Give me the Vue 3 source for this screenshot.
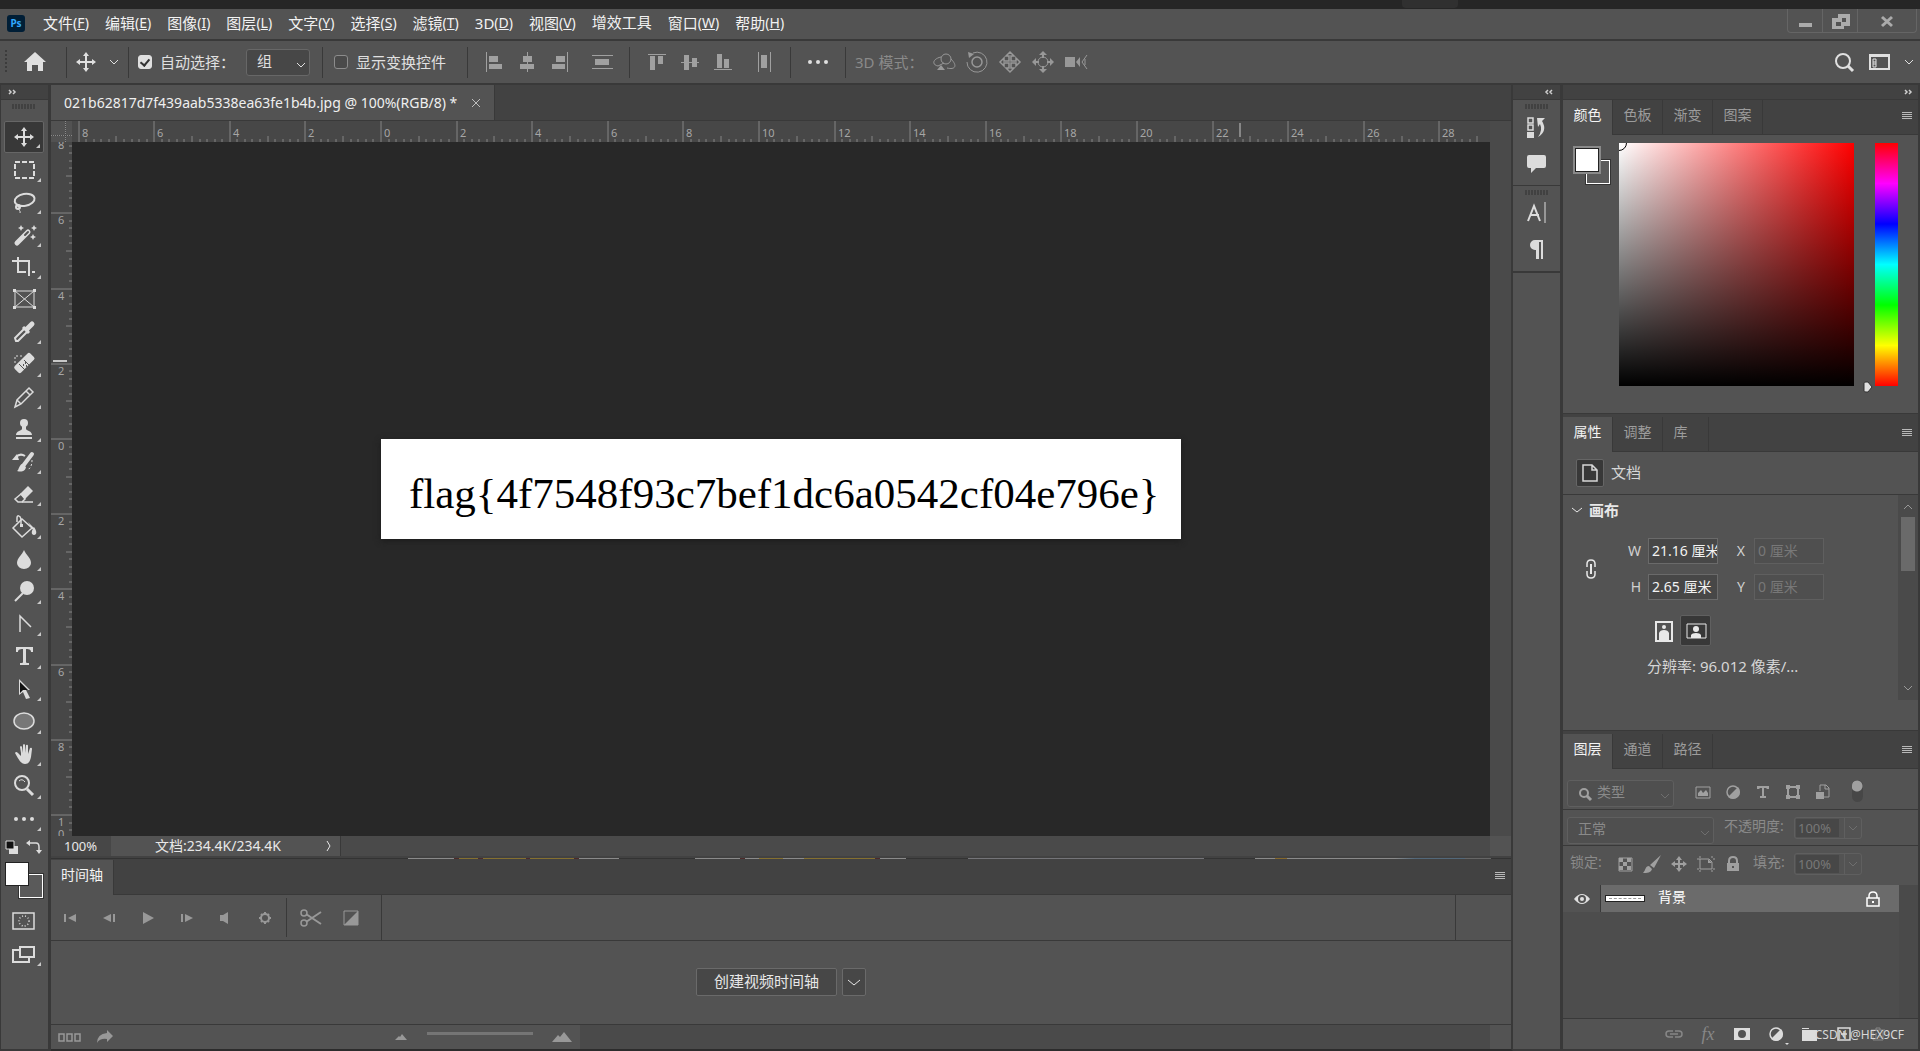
<script setup>
import { h, ref } from 'vue'

const DOT3 = '<circle cx="-8" cy="0" r="2"/><circle cx="0" cy="0" r="2"/><circle cx="8" cy="0" r="2"/>'
const MOVE =
  '<path d="M-7 0H7M0-7V7" stroke-width="2"/><path fill="currentColor" stroke="none" d="M0-10L3-6H-3ZM0 10L3 6H-3ZM-10 0L-6-3V3ZM10 0L6-3V3Z"/>'
const F = (d) => `<path fill="currentColor" stroke="none" d="${d}"/>`
const S = (d, w = 2) => `<path fill="none" stroke-width="${w}" d="${d}"/>`

/* Glyphs are drawn around their own centre point. */
const glyphs = {
  move: MOVE,
  marquee: '<rect x="-9" y="-8" width="19" height="16" stroke-dasharray="5 2" stroke-width="2"/>',
  lasso: '<ellipse cx="1" cy="-2" rx="10" ry="6" transform="rotate(-10)"/><circle cx="-6" cy="5" r="2"/>' + S('M-5 5C-7 8-3 8-4 11M-8 5L-3 4', 1),
  wand: '<path d="M-7 8L4-3" stroke-width="5" stroke-linecap="round"/><path d="M1 0L4-3" stroke="#535353" stroke-width="2" stroke-linecap="round"/>' +
    F('M-3-10L-2-8L0-7L-2-6L-3-4L-4-6L-6-7L-4-8ZM10-10L11-8L13-7L11-6L10-4L9-6L7-7L9-8ZM9-1L10 1L12 2L10 3L9 5L8 3L6 2L8 1Z'),
  crop: S('M-12-6H5V9M-6-10V5H2M8 5H11', 2),
  frame: S('M-9-8H10V8H-9ZM-9-8L10 8M10-8L-9 8', 1) + F('M-11-10h3v3h-3ZM9-10h3v3h-3ZM-11 7h3v3h-3ZM9 7h3v3h-3Z'),
  dropper: S('M-8 9L-9 6L1-4L4-1L-6 9Z', 2) + '<path d="M-1-5L5 1" stroke-width="3"/><path d="M3-3L8-8" stroke-width="5" stroke-linecap="round"/>',
  heal: '<rect x="-10" y="-5" width="22" height="9" rx="2" transform="rotate(-45)" fill="currentColor" stroke="none"/>' +
    '<path d="M-5 0L1 6M0-4L5 1" stroke="#535353" stroke-width="1"/><path d="M-9-1V-8H-2" stroke-width="1" stroke-dasharray="2 2"/>' +
    '<path d="M-1 1h1M1-1h1M2 2h1" stroke="#535353" stroke-width="2"/>',
  pencil: S('M-9 10L-7 3L5-9L9-5L-3 7ZM-7 3L-3 7M2-6L6-2', 1.5),
  stamp: '<circle cx="0" cy="-6" r="4" fill="currentColor" stroke="none"/>' + F('M-2-4H2L2 0C3 2 8 2 8 6H-8C-8 2-3 2-2 0ZM-8 8H8V10H-8Z'),
  history: '<path d="M-1 4L8-8" stroke-width="4" stroke-linecap="round"/>' + F('M-2 2L2 5C1 10-3 10-7 9C-5 8-5 3-2 2ZM-12-2L-7-8L-5-2Z') +
    S('M-8-5C-5-8-2-8 1-6', 2) + '<path d="M8-2C8 4 6 7 3 8" stroke-width="1" stroke-dasharray="2 2"/>',
  eraser: F('M-4 0L4-8L9-3L1 5Z') + S('M-3 0L-9 5L-6 8H-2L1 5Z', 1.5) + S('M-2 8H9', 1.5),
  bucket: S('M-11 1L-2-8L8 1L-2 10Z', 1.5) + S('M-7-5V-9C-7-12-4-12-3-8V-3', 1.5) + F('M-4-3h3v3h-3ZM10 0C13 4 13 8 10 8S7 4 10 0ZM4-5L11 2L8 2Z'),
  blur: F('M0-9C2-4 7-1 7 4A7 6 0 0 1-7 4C-7-1-2-4 0-9Z'),
  dodge: '<circle cx="3" cy="-4" r="7" fill="currentColor" stroke="none"/>' + S('M-9 9L-1 1', 2),
  pen: S('M-4 8V-8L7 3', 1.5),
  type: F('M-8-9H9V-4H7C7-6 6-7 2-7V6C2 7 3 7 5 7V9H-4V7C-2 7-1 7-1 6V-7C-5-7-6-6-6-4H-8Z'),
  arrow: '<path d="M-5-10L6 1H2L6 9L2 10L-1 3L-5 6Z" fill="currentColor" stroke="none"/><path d="M-4-7L4 1H-1L-4 4Z" fill="#111" stroke="none"/>',
  ellipse: '<ellipse rx="10" ry="8" fill="#777" stroke-width="1.5"/>',
  hand: F('M-3-1L-4-7Q-3-9-2-7L-1-1V-9Q0-11 1-9V-1L2-9Q4-10 4-8V0L6-6Q8-7 8-5L7 3C6 7 5 10 1 10C-3 10-5 6-9-1Q-8-3-6-1L-3 2Z'),
  zoom: '<circle cx="-2" cy="-3" r="7"/><path d="M-5-5Q-2-8 1-4" stroke-width="1"/>' + S('M3 3L9 9', 3),
  more: DOT3,
}
const tools = [
  ['move', '移动工具'], ['marquee', '矩形选框工具'], ['lasso', '套索工具'], ['wand', '魔棒工具'], ['crop', '裁剪工具'],
  ['frame', '图框工具'], ['dropper', '吸管工具'], ['heal', '污点修复画笔工具'], ['pencil', '铅笔工具'], ['stamp', '仿制图章工具'],
  ['history', '历史记录画笔工具'], ['eraser', '橡皮擦工具'], ['bucket', '油漆桶工具'], ['blur', '模糊工具'], ['dodge', '减淡工具'],
  ['pen', '钢笔工具'], ['type', '横排文字工具'], ['arrow', '路径选择工具'], ['ellipse', '椭圆工具'], ['hand', '抓手工具'],
  ['zoom', '缩放工具'], ['more', '编辑工具栏'],
]

Object.assign(glyphs, {
  home: F('M0-10L11 0H8V9H3V3H-3V9H-8V0H-11Z'),
  chev: S('M-4-2L0 2L4-2', 1),
  chevBig: S('M-6-2L0 3L6-2', 1),
  chevMid: S('M-5-2L0 2L5-2', 1),
  chevUp: S('M-4 2L0-2L4 2', 1),
  chevRight: S('M-2-5L1 0L-2 5', 1),
  alignL: F('M-8-10h1V10h-1ZM-5-6H4V0H-5ZM-5 2H8V7H-5Z'),
  alignC: F('M0-10h1V10h-1ZM-4-6H5V0H-4ZM-7 2H7V7H-7Z'),
  alignR: F('M7-10h1V10h-1ZM-4-6H5V0H-4ZM-8 2H5V7H-8Z'),
  distV: F('M-10-7H11v1H-10ZM-7-3H7V3H-7ZM-10 6H11v1H-10Z'),
  alignT: F('M-9-8H9v1H-9ZM-7-6H-2V8H-7ZM1-6H6V2H1Z'),
  alignM: F('M-9 0H9v1H-9ZM-6-7H-1V8H-6ZM2-4H7V5H2Z'),
  alignB: F('M-9 7H9v1H-9ZM-6-8H-1V6H-6ZM1-3H6V6H1Z'),
  distH: F('M-6-10h1V10h-1ZM-3-7H3V6H-3ZM6-10h1V10h-1Z'),
  orbit: '<circle cx="2" cy="-3" r="5" stroke-width="1"/>' + S('M-3-5C-12-3-12 3-6 4L0 1M7-3C14 4 11 8 3 6', 1) + F('M-7 8L-3 3L1 8Z'),
  roll: '<circle cx="0" cy="0" r="5" stroke-width="1.5"/><path d="M-4-9A10 10 0 1 1-10 0" stroke-width="1"/>' + F('M-9-10L-3-8L-8-4Z'),
  pan: S('M-1-1V-6H-4L0-10L4-6H1V-1H6V-4L10 0L6 4V1H1V6H4L0 10L-4 6H-1V1H-6V4L-10 0L-6-4V-1Z', 1.5),
  slide: '<circle cx="0" cy="0" r="5" stroke-width="1"/>' + F('M0-11L4-7H1V-4H-1V-7H-4ZM0 11L4 7H1V4H-1V7H-4ZM-11 0L-7-4V-1H-4V1H-7V4ZM11 0L7-4V-1H4V1H7V4Z'),
  camera: F('M-11-5H-1V5H-11ZM0 0L4-5V5Z') + S('M11-7L6 0L11 7M9-3L9 3', 1),
  search: '<circle cx="-1" cy="-1" r="7"/>' + S('M4 4L9 9', 3),
  searchSm: '<circle cx="-1" cy="-1" r="4"/>' + S('M2 2L6 6', 3),
  workspace: S('M-10-7H9V7H-10Z', 2) + F('M-10-8H10V-5H-10Z') + S('M-7-3H-4V5H-7ZM-7 0H-4M-7 2H-4', 1),
  minimize: F('M-6 2H7V6H-6Z'),
  restore: F('M-2-7H10V5H2V1H6V-3H2V1H-2ZM-8-3H-2V1H-4V5H1V1H4V8H-8Z'),
  close: S('M-5-4L5 5M5-4L-5 5', 3),
  closeSm: S('M-4-4L4 4M4-4L-4 4', 1),
  burger: F('M-5-4H5v1H-5ZM-5-2H5v1H-5ZM-5 0H5v1H-5ZM-5 2H5v1H-5Z'),
  dblL: S('M-1-2L-3 0L-1 2M3-2L1 0L3 2', 1.5),
  dblR: S('M1-2L3 0L1 2M-3-2L-1 0L-3 2', 1.5),
  hist: '<path fill="none" stroke-width="1.5" d="M-8-9H-3V-4H-8ZM-8-2H-3V3H-8Z"/>' + F('M-9 5H-2V11H-9ZM1-9H9L6-6Q12 4 2 10Q7 3 4-3L2 0Z'),
  comment: F('M-7-8H8Q10-8 10-6V3Q10 5 8 5H0L-5 10V5H-7Q-9 5-9 3V-6Q-9-8-7-8Z'),
  charp: S('M-8 8L-2-7L4 8M-6 2H3', 2) + S('M9-11V10', 1),
  para: F('M-1 1A5 5 0 0 1-1-9H7V10H5V-7H3V10H0V1Z'),
  doc: S('M-7-8H2L7-3V8H-7ZM2-8V-3H7', 1.5),
  chain: S('M-4-2V-5Q-4-9 0-9T4-5V-2M-4 2V5Q-4 9 0 9T4 5V2', 1.5) + S('M0-5V5', 2),
  portrait: S('M-8-9H8V10H-8Z', 2) + '<circle cx="0" cy="-4" r="2" fill="currentColor" stroke="none"/>' + F('M-5 9V2Q-4-1 0-1T5 2V9Z'),
  landscape: S('M-9-7H10V7H-9Z', 1) + '<circle cx="0" cy="-2" r="3" fill="currentColor" stroke="none"/>' + F('M-5 7V4Q-4 2 0 2T5 4V7Z'),
  image: S('M-7-5H7V6H-7Z', 1) + F('M-5 4V1L-2-2L0 1L3-2L5 1V4Z'),
  adjust: '<circle cx="0" cy="0" r="6" stroke-width="1.5"/>' + F('M5-5A7 7 0 0 1-5 5Z'),
  typeSm: F('M-6-6H6V-3H4L3-4H1V4H3V6H-3V4H-1V-4H-3L-4-3H-6Z'),
  shape: S('M-5-5H5V5H-5Z', 2) + F('M-7-7h4v4h-4ZM3-7h4v4h-4ZM-7 3h4v4h-4ZM3 3h4v4h-4Z'),
  smart: S('M-3-1V-7H3L6-4V5H1M2-7V-3H6', 1) + F('M-7 0H1V7H-7Z'),
  checker: S('M-6-6H7V7H-6Z', 1) + F('M-6-6h4v4h-4ZM2-6h4v4h-4ZM-2-2h4v4h-4ZM-6 2h4v4h-4ZM2 2h4v4h-4Z'),
  brush: F('M9-9L2 4L-2 1ZM-3 2L0 5C-1 9-5 9-9 9C-6 6-7 2-3 2Z'),
  moveSm: '<path d="M-5 0H5M0-5V5"/>' + F('M0-8L3-4H-3ZM0 8L3 4H-3ZM-8 0L-4-3V3ZM8 0L4-3V3Z'),
  artboard: S('M-9-5H-6M-6-8V-6M-6-5H3L6-2V5H-6ZM6-8V-6M7 5H9M-9 5H-7M-6 6V8M6 6V8M7-5H9', 1) + F('M2-5L6-1H2Z'),
  lock: S('M-4-1V-3Q-4-7 0-7T4-3V-1', 2) + '<path fill="currentColor" stroke="none" fill-rule="evenodd" d="M-6-1H6V7H-6ZM-1 2V4H1V2Z"/>',
  lockOpen: S('M-4-1V-3Q-4-7 0-7T4-3V-1', 1.5) + S('M-6-1H6V7H-6Z', 1.5) + F('M-1 2H1V4H-1Z'),
  eye: '<path fill="currentColor" stroke="none" fill-rule="evenodd" d="M-8 0Q0-10 8 0Q0 10-8 0ZM0-4A4 4 0 0 0 0 4A4 4 0 0 0 0-4Z"/><circle cx="0" cy="0" r="2" fill="currentColor" stroke="none"/>',
  link: S('M-1-3H-5Q-8-3-8 0T-5 3H-1M1-3H5Q8-3 8 0T5 3H1M-4 0H4', 1.5),
  mask: '<path fill="currentColor" stroke="none" fill-rule="evenodd" d="M-8-6H8V6H-8ZM0-4A4 4 0 0 0 0 4A4 4 0 0 0 0-4Z"/>',
  folder: F('M-8-6H-1V-5H-8ZM-8-4H7V7H-8Z'),
  plus: S('M-6-6H6V6H-6ZM0-3V3M-3 0H3', 1.5),
  trash: S('M-7-4H7M-2-4V-6H2V-4M-5-4V6H5V-4M-2-1V4M2-1V4', 1),
  first: F('M-6-4H-4V4H-6ZM6-4V4L-2 0Z'),
  prev: F('M-6 0L2-4V4ZM4-4H6V4H4Z'),
  play: F('M-5-6L6 0L-5 6Z'),
  next: F('M-6-4H-4V4H-6ZM-2-4V4L6 0Z'),
  sound: F('M-6-3H-3L2-6V6L-3 3H-6Z'),
  gear: '<circle cx="0" cy="0" r="4"/><path d="M0-6V-4M0 4V6M-6 0H-4M4 0H6M-4-4L-3-3M4-4L3-3M-4 4L-3 3M4 4L3 3" stroke-width="2"/>',
  scissors: '<circle cx="-7" cy="-5" r="3" stroke-width="1.5"/><circle cx="-7" cy="5" r="3" stroke-width="1.5"/>' + S('M-5-4L10 6M-5 4L10-6', 2),
  transition: S('M-7-7H7V7H-7Z', 1) + F('M7-7V7H-7Z'),
  frames: S('M-11-3H-6V4H-11ZM-3-3H2V4H-3ZM5-3H10V4H5Z', 1.5),
  share: F('M2-7L8-1L2 5V2Q-5 1-8 6Q-8-3 2-4Z'),
  hillSm: F('M-6 3L-2-1L-1 0L1-3L6 3Z'),
  hillLg: F('M-10 5L-4-2L-2 0L2-5L10 5Z'),
  quick: S('M-11-8H10V8H-11Z', 1.5) + '<circle cx="0" cy="0" r="5" stroke-width="1.5" stroke-dasharray="1 2"/>',
  screens: S('M-4-7H10V3H-4Z', 2) + S('M-4-4H-11V8H5V3', 2),
  defaults: F('M-3-1H6V7H-3Z') + '<path d="M-6-6H2V2H-6Z" fill="#111" stroke="currentColor" stroke-width="1"/>',
  swap: S('M-5-4H2Q5-4 5 0V4', 1.5) + F('M-8-4L-4-7V-1ZM5 7L2 3H8Z'),
})

const Glyph = (p) =>
  h('svg', {
    width: p.s, height: p.s, viewBox: `${-p.s / 2} ${-p.s / 2} ${p.s} ${p.s}`,
    fill: p.name === 'more' ? 'currentColor' : 'none', stroke: p.name === 'more' ? 'none' : 'currentColor', 'stroke-width': 2,
    'aria-hidden': 'true', innerHTML: glyphs[p.name],
  })
Glyph.props = { name: String, s: { type: Number, default: 24 } }

const menus = [
  ['文件', 'F'], ['编辑', 'E'], ['图像', 'I'], ['图层', 'L'], ['文字', 'Y'], ['选择', 'S'], ['滤镜', 'T'],
  ['3D', 'D'], ['视图', 'V'], ['增效工具', ''], ['窗口', 'W'], ['帮助', 'H'],
]

const modes3d = [['orbit', '旋转'], ['roll', '滚动'], ['pan', '拖动'], ['slide', '滑动'], ['camera', '缩放相机']]
const playback = [['first', '转到第一帧'], ['prev', '上一帧'], ['play', '播放'], ['next', '下一帧'], ['sound', '静音'], ['gear', '播放选项']]
const filters = [['image', '像素图层'], ['adjust', '调整图层'], ['typeSm', '文字图层'], ['shape', '形状图层'], ['smart', '智能对象']]
const locks = [['checker', '锁定透明像素'], ['brush', '锁定图像像素'], ['moveSm', '锁定位置'], ['artboard', '防止嵌套'], ['lock', '锁定全部']]

/* Ruler ticks in fifths of a centimetre, measured from the document's corner. */
function ticks(from, to, cm, half) {
  const out = []
  for (let i = from * 5; i <= to * 5; i++) {
    out.push({
      p: Math.round((i * cm) / 5 - half),
      len: i % 10 === 0 ? 22 : i % 5 === 0 ? 6 : 3,
      label: i % 10 === 0 ? String(Math.abs(i / 5)) : '',
    })
  }
  return out
}
const hTicks = ticks(-9, 29, 37.8, 400)
const vTicks = ticks(-8, 11, 37.6, 50)

const autoSelect = ref(true)
const showTransform = ref(false)
</script>

<template>
  <div class="app">
    <div class="backdrop"><i></i></div>

    <header class="menubar">
      <span class="logo">Ps</span>
      <nav class="menus">
        <button v-for="[t, k] in menus" :key="t" :class="{ raised: !k }">{{ t }}<span v-if="k" class="key">(<u>{{ k }}</u>)</span></button>
      </nav>
      <div class="winctl">
        <button aria-label="最小化"><Glyph name="minimize" :s="24" /></button>
        <button aria-label="还原"><Glyph name="restore" :s="24" /></button>
        <button class="wide" aria-label="关闭"><Glyph name="close" :s="24" /></button>
      </div>
    </header>

    <section class="options">
      <span class="vgrip"></span>
      <button class="home" aria-label="主页"><Glyph name="home" /></button>
      <span class="sep"></span>
      <button class="cur" aria-label="当前工具"><Glyph name="move" :s="22" /><Glyph name="chev" :s="12" /></button>
      <span class="sep"></span>
      <label class="check auto"><input v-model="autoSelect" type="checkbox" />自动选择：</label>
      <span class="pick group"><select aria-label="自动选择对象"><option>组</option></select><Glyph name="chev" :s="12" /></span>
      <span class="sep"></span>
      <label class="check show"><input v-model="showTransform" type="checkbox" />显示变换控件</label>
      <span class="sep"></span>
      <div class="aligns first">
        <button aria-label="左对齐"><Glyph name="alignL" /></button>
        <button aria-label="水平居中对齐"><Glyph name="alignC" /></button>
        <button aria-label="右对齐"><Glyph name="alignR" /></button>
        <button class="last" aria-label="垂直分布"><Glyph name="distV" /></button>
      </div>
      <span class="sep"></span>
      <div class="aligns">
        <button aria-label="顶对齐"><Glyph name="alignT" /></button>
        <button aria-label="垂直居中对齐"><Glyph name="alignM" /></button>
        <button aria-label="底对齐"><Glyph name="alignB" /></button>
        <button class="last" aria-label="水平分布"><Glyph name="distH" /></button>
      </div>
      <span class="sep"></span>
      <button class="dots" aria-label="更多"><Glyph name="more" /></button>
      <span class="sep"></span>
      <span class="mode">3D 模式：</span>
      <div class="modes">
        <button v-for="[n, t] in modes3d" :key="n" :aria-label="t"><Glyph :name="n" /></button>
      </div>
      <div class="right">
        <button aria-label="搜索"><Glyph name="search" /></button>
        <button class="ws" aria-label="工作区"><Glyph name="workspace" /><Glyph name="chev" :s="12" /></button>
      </div>
    </section>

    <div class="body">
      <aside class="tools">
        <button class="fold" aria-label="展开工具栏"><Glyph name="dblR" :s="12" /></button>
        <span class="grip"></span>
        <div class="toollist">
          <button v-for="([n, t], i) in tools" :key="n" :class="{ on: i === 0, corner: n !== 'frame' }" :aria-label="t">
            <Glyph :name="n" :s="28" />
          </button>
        </div>
        <div class="mini">
          <button aria-label="默认颜色"><Glyph name="defaults" :s="16" /></button>
          <button aria-label="切换颜色"><Glyph name="swap" :s="18" /></button>
        </div>
        <div class="swatches"><button class="bg" aria-label="背景色"></button><button class="fg" aria-label="前景色"></button></div>
        <button class="extra" aria-label="快速蒙版"><Glyph name="quick" :s="28" /></button>
        <button class="extra corner" aria-label="屏幕模式"><Glyph name="screens" :s="28" /></button>
      </aside>

      <main class="work">
        <div class="doctabs">
          <div class="doctab">
            <span>021b62817d7f439aab5338ea63fe1b4b.jpg @ 100%(RGB/8) *</span>
            <button aria-label="关闭文档"><Glyph name="closeSm" :s="12" /></button>
          </div>
        </div>
        <div class="docview">
          <div class="corner0"></div>
          <svg class="hruler" aria-hidden="true">
            <svg x="50%" overflow="visible">
              <g v-for="t in hTicks" :key="t.p">
                <line :x1="t.p" :x2="t.p" :y1="21 - t.len" y2="21" />
                <text v-if="t.label" :x="t.p + 3" y="16">{{ t.label }}</text>
              </g>
              <line class="mark" x1="459" x2="459" y1="2" y2="16" />
            </svg>
          </svg>
          <div class="vscroll"></div>
          <svg class="vruler" aria-hidden="true">
            <svg y="50%" overflow="visible">
              <g v-for="t in vTicks" :key="t.p">
                <line :y1="t.p" :y2="t.p" :x1="21 - t.len" x2="21" />
                <text v-for="(c, j) in t.label" :key="j" x="7" :y="t.p + 11 + j * 12">{{ c }}</text>
              </g>
              <line class="mark wide" y1="-128" y2="-128" x1="2" x2="16" />
            </svg>
          </svg>
          <div class="canvas">
            <div class="paper">flag{4f7548f93c7bef1dc6a0542cf04e796e}</div>
          </div>
        </div>
        <div class="status">
          <input class="zoom" value="100%" aria-label="缩放比例" />
          <button class="info"><span>文档:234.4K/234.4K</span><Glyph name="chevRight" :s="14" /></button>
          <span class="hscroll"></span>
          <span class="size"></span>
        </div>
        <div class="seam"><i class="a"></i><i class="b"></i><i class="c"></i><i class="d"></i></div>

        <section class="timeline">
          <div class="tabs">
            <button class="tab on">时间轴</button>
            <button class="burger" aria-label="面板菜单"><Glyph name="burger" :s="12" /></button>
          </div>
          <div class="controls">
            <div class="play">
              <button v-for="[n, t] in playback" :key="n" :aria-label="t"><Glyph :name="n" :s="20" /></button>
            </div>
            <div class="edit">
              <button aria-label="在播放头处拆分"><Glyph name="scissors" /></button>
              <button aria-label="过渡效果"><Glyph name="transition" :s="20" /></button>
            </div>
            <span class="tailbox"></span>
          </div>
          <div class="stage">
            <button class="create">创建视频时间轴</button>
            <button class="createmenu" aria-label="时间轴类型"><Glyph name="chevBig" :s="18" /></button>
          </div>
          <div class="tfoot">
            <div class="tfleft">
              <button aria-label="转换为帧动画"><Glyph name="frames" /></button>
              <button aria-label="渲染视频"><Glyph name="share" :s="20" /></button>
            </div>
            <div class="tfzoom">
              <Glyph name="hillSm" :s="16" />
              <span class="track"></span>
              <Glyph name="hillLg" />
            </div>
            <span class="hscroll"></span>
            <span class="size"></span>
          </div>
        </section>
      </main>

      <aside class="dock">
        <button class="fold end" aria-label="展开面板"><Glyph name="dblL" :s="12" /></button>
        <div class="dockgroup">
          <span class="grip"></span>
          <button aria-label="历史记录"><Glyph name="hist" /></button>
          <button aria-label="注释"><Glyph name="comment" /></button>
        </div>
        <div class="dockgroup">
          <span class="grip"></span>
          <button aria-label="字符"><Glyph name="charp" /></button>
          <button aria-label="段落"><Glyph name="para" /></button>
        </div>
        <div class="dockrest"></div>
      </aside>

      <aside class="panels">
        <button class="fold end" aria-label="折叠面板"><Glyph name="dblR" :s="12" /></button>

        <section class="panel color">
          <div class="tabs">
            <button class="tab on">颜色</button><button class="tab">色板</button><button class="tab">渐变</button><button class="tab">图案</button>
            <button class="burger" aria-label="面板菜单"><Glyph name="burger" :s="12" /></button>
          </div>
          <div class="picker">
            <div class="swatches"><button class="bg" aria-label="背景色"></button><button class="fg" aria-label="前景色"></button></div>
            <div class="field"><i></i></div>
            <div class="hue"><svg width="10" height="12" viewBox="0 0 10 12"><path d="M1 2Q1 1 3 1H5L9 6L5 11H3Q1 11 1 10Z" fill="#e0e0e0" stroke="#333" /></svg></div>
          </div>
        </section>

        <section class="panel props">
          <div class="tabs">
            <button class="tab on">属性</button><button class="tab">调整</button><button class="tab narrow">库</button>
            <button class="burger" aria-label="面板菜单"><Glyph name="burger" :s="12" /></button>
          </div>
          <div class="kind"><span class="kindicon"><Glyph name="doc" :s="22" /></span><span class="kindname">文档</span></div>
          <div class="propbody">
            <div class="propmain">
              <h3><Glyph name="chevMid" :s="14" />画布</h3>
              <div class="dims">
                <Glyph class="chain" name="chain" :s="22" />
                <label for="dw">W</label><input id="dw" value="21.16 厘米" />
                <label for="dx" class="pos">X</label><input id="dx" value="0 厘米" disabled />
                <label for="dh">H</label><input id="dh" value="2.65 厘米" />
                <label for="dy" class="pos">Y</label><input id="dy" value="0 厘米" disabled />
              </div>
              <div class="orient">
                <button aria-label="纵向"><Glyph name="portrait" /></button>
                <button class="on" aria-label="横向"><Glyph name="landscape" /></button>
              </div>
              <p>分辨率: 96.012 像素/...</p>
            </div>
            <div class="pscroll"><Glyph name="chevUp" :s="14" /><i></i><Glyph class="dn" name="chev" :s="14" /></div>
          </div>
        </section>

        <section class="panel layers">
          <div class="tabs">
            <button class="tab on">图层</button><button class="tab">通道</button><button class="tab">路径</button>
            <button class="burger" aria-label="面板菜单"><Glyph name="burger" :s="12" /></button>
          </div>
          <div class="lrow filter">
            <span class="pick kindpick"><Glyph class="lead" name="searchSm" :s="16" /><select aria-label="图层类型"><option>类型</option></select><Glyph name="chev" :s="12" /></span>
            <div class="ficons"><button v-for="[n, t] in filters" :key="n" :aria-label="t"><Glyph :name="n" :s="18" /></button></div>
            <button class="toggle" aria-label="图层过滤开关"></button>
          </div>
          <div class="lrow blend">
            <span class="pick"><select aria-label="混合模式"><option>正常</option></select><Glyph name="chev" :s="12" /></span>
            <label for="op">不透明度:</label>
            <span class="num"><input id="op" value="100%" disabled /><button aria-label="不透明度滑块"><Glyph name="chev" :s="12" /></button></span>
          </div>
          <div class="lrow locks">
            <span class="lab">锁定:</span>
            <div class="licons"><button v-for="[n, t] in locks" :key="n" :aria-label="t"><Glyph :name="n" :s="20" /></button></div>
            <label for="fl">填充:</label>
            <span class="num"><input id="fl" value="100%" disabled /><button aria-label="填充滑块"><Glyph name="chev" :s="12" /></button></span>
          </div>
          <div class="list">
            <div class="rows">
              <div class="layer">
                <button class="eye" aria-label="指示图层可见性"><Glyph name="eye" :s="18" /></button>
                <div class="lname"><span class="thumb"><i></i></span><span class="lt">背景</span><Glyph class="lk" name="lockOpen" :s="18" /></div>
              </div>
            </div>
            <div class="lscroll"></div>
          </div>
          <div class="lfoot">
            <button class="dim" aria-label="链接图层"><Glyph name="link" :s="20" /></button>
            <button class="dim fx">fx</button>
            <button aria-label="添加蒙版"><Glyph name="mask" :s="20" /></button>
            <button class="drop" aria-label="调整图层"><Glyph name="adjust" :s="20" /></button>
            <button aria-label="新建组"><Glyph name="folder" :s="20" /></button>
            <button aria-label="新建图层"><Glyph name="plus" :s="20" /></button>
            <button class="dim" aria-label="删除图层"><Glyph name="trash" :s="20" /></button>
            <span class="credit">CSDN @HEX9CF</span>
          </div>
        </section>
      </aside>
    </div>
  </div>
</template>

<style>
body { margin: 0; background: #262626; }
</style>

<style scoped>
.app {
  --line: #393939;
  --bg: #535353;
  --bar: #424242;
  --ink: #e8e8e8;
  --dim: #9c9c9c;
  min-height: 100vh;
  display: flex;
  flex-direction: column;
  background: var(--bar);
  color: var(--ink);
  font: 14px/20px "Noto Sans", "Noto Sans CJK SC", sans-serif;
}
.app * { box-sizing: border-box; }
button, input, select { font: inherit; color: inherit; background: none; border: 0; padding: 0; margin: 0; border-radius: 0; }
button { display: flex; align-items: center; justify-content: center; flex: none; }
svg { display: block; flex: none; }
select { appearance: none; width: 100%; height: 100%; }

.backdrop { height: 9px; background: #262626; }
.backdrop i { display: block; width: 56px; height: 8px; margin-left: 73%; background: #303030; border-radius: 0 0 4px 4px; }

.menubar { display: flex; align-items: flex-start; height: 30px; background: var(--bg); }
.logo { width: 18px; height: 17px; margin: 6px 18px 0 7px; border-radius: 3px; background: #001e36; color: #31a8ff; font-size: 10px; font-weight: 700; line-height: 16px; text-align: center; }
.menus { display: flex; gap: 15px; flex: 1; color: #f2f2f2; font-size: 15px; line-height: 20px; }
.menus button { padding: 4px 1px 0 0; white-space: nowrap; }
.menus .raised { padding-top: 2px; }
.menus .key { font-size: 14px; }
.winctl { display: flex; margin-right: 3px; border: 1px solid #656565; border-top: 0; border-radius: 0 0 4px 4px; color: #ababab; }
.winctl button { width: 35px; height: 23px; border-right: 1px solid #656565; }
.winctl button.wide { width: 58px; border: 0; }

.options { display: flex; align-items: center; height: 46px; padding: 0 5px; background: var(--bg); border: 2px solid var(--line); border-width: 2px 0; font-size: 15px; color: #e0e0e0; }
.vgrip { width: 2px; height: 24px; background: repeating-linear-gradient(#3c3c3c 0 2px, transparent 2px 4px); }
.home { width: 59px; padding-right: 3px; }
.sep { width: 1px; height: 31px; flex: none; background: var(--line); }
.cur { width: 61px; gap: 11px; }
.check { display: flex; align-items: center; flex: none; white-space: nowrap; }
.check input { appearance: none; width: 14px; height: 14px; margin-right: 8px; border: 1px solid #8c8c8c; border-radius: 3px; background: #4a4a4a; }
.check input:checked { background: #e0e0e0; border-color: #e0e0e0; position: relative; }
.check input:checked::after { content: ""; position: absolute; left: 3px; top: 1px; width: 4px; height: 7px; border: solid #333; border-width: 0 2px 2px 0; transform: rotate(40deg); }
.auto { width: 117px; padding-left: 9px; }
.show { width: 144px; padding-left: 11px; }
.pick { position: relative; display: flex; align-items: center; border: 1px solid #676767; border-radius: 3px; background: #474747; flex: none; }
.pick select { padding: 0 0 2px 10px; }
.pick > svg:last-child { position: absolute; right: 2px; top: 9px; pointer-events: none; }
.group { width: 64px; height: 27px; margin-right: 12px; background: #474747; }
.aligns { display: flex; padding-left: 15px; color: #a0a0a0; width: 160px; gap: 9px; }
.aligns button { width: 24px; }
.aligns.first { width: 161px; padding-left: 14px; }
.aligns.first .last { margin-left: 9px; }
.aligns:not(.first) .last { margin-left: 8px; }
.dots { width: 54px; }
.mode { padding-left: 9px; width: 84px; color: #8a8a8a; white-space: nowrap; }
.modes { display: flex; gap: 9px; flex: 1; color: #989898; padding-left: 2px; }
.right { display: flex; gap: 12px; }
.ws { gap: 11px; }

.body { display: flex; flex: 1; }
.fold { width: 100%; height: 15px; padding-left: 5px; justify-content: flex-start; background: var(--bar); border-bottom: 1px solid var(--line); color: #d0d0d0; }
.fold.end { justify-content: flex-end; padding: 0 5px 0 0; }
.grip { display: block; width: 24px; height: 5px; margin: 4px auto 0; background: repeating-linear-gradient(90deg, #414141 0 2px, transparent 2px 3px); flex: none; }

.tools { width: 51px; padding: 0; flex: none; background: var(--bg); border: solid var(--line); border-width: 0 3px 2px 1px; color: #dcdcdc; }
.tools .grip { margin-left: 11px; }
.toollist { display: grid; grid-template-rows: repeat(22, 1fr); height: 714px; margin: 12px 0 0 3px; }
.toollist button { position: relative; width: 40px; }
.toollist .on { background: #383838; border: 1px solid #666; border-radius: 2px; }
.corner::after { content: ""; position: absolute; right: 3px; bottom: 4px; border: 2px solid; border-color: transparent #c8c8c8 #c8c8c8 transparent; }
.mini { display: flex; gap: 5px; margin: 2px 0 0 3px; height: 20px; }
.swatches { position: relative; width: 38px; height: 36px; margin: 5px 0 0 4px; }
.swatches .bg, .swatches .fg { position: absolute; width: 24px; height: 24px; border: 1px solid #222; }
.swatches .bg { right: 0; bottom: 0; background: #5a5a5a; border: 1px solid #fff; outline: 1px solid #333; }
.swatches .fg { left: 0; top: 0; background: #fff; }
.extra { position: relative; width: 40px; height: 32px; margin: 7px 0 0 3px; }
.extra + .extra { margin-top: 1px; }

.work { display: flex; flex-direction: column; flex: 1; min-width: 0; border-right: 2px solid var(--line); border-bottom: 2px solid #2c2c2c; }
.doctabs { display: flex; height: 36px; background: var(--bar); border-bottom: 1px solid var(--line); }
.doctab { display: flex; align-items: center; gap: 13px; padding: 0 12px 0 13px; background: var(--bg); border-right: 1px solid var(--line); color: #efefef; white-space: nowrap; }
.doctab button { color: #bdbdbd; }
.docview { display: grid; grid-template: 21px 1fr / 21px 1fr 21px; flex: 1; background: #282828; }
.corner0 { background: repeating-linear-gradient(90deg, transparent 0 1px, #474747 1px 2px) 0 14px / 100% 1px no-repeat, repeating-linear-gradient(transparent 0 1px, #474747 1px 2px) 14px 0 / 1px 100% no-repeat, linear-gradient(#8a8a8a, #8a8a8a) 0 14px / 100% 1px no-repeat, linear-gradient(#8a8a8a, #8a8a8a) 14px 0 / 1px 100% no-repeat, #525252; }
.hruler, .vruler { display: block; width: 100%; background: #474747; stroke: #858585; overflow: hidden; }
.hruler { height: 100%; }
.vruler { grid-column: 1; grid-row: 2; height: 0; min-height: 100%; }
.hruler text, .vruler text { fill: #a6a6a6; stroke: none; font-size: 11px; }
.mark { stroke: #c8c8c8; }
.mark.wide { stroke-width: 2px; }
.vscroll { grid-column: 3; grid-row: 1 / 3; background: #4a4a4a; }
.canvas { grid-column: 2; grid-row: 2; display: flex; align-items: center; justify-content: center; }
.paper { width: 800px; height: 100px; padding-left: 28px; background: #fff; color: #000; font: 43px/110px "Liberation Serif", serif; font-variant-ligatures: none; white-space: nowrap; box-shadow: 0 2px 6px #1c1c1c; }
.status { display: flex; height: 20px; background: #4a4a4a; }
.zoom { width: 60px; padding-left: 13px; background: #474747; font-size: 13px; }
.info { width: 230px; padding: 0 4px 1px 44px; justify-content: space-between; background: var(--bg); border-right: 1px solid var(--line); white-space: nowrap; }
.hscroll { flex: 1; background: #4a4a4a; }
.size { width: 21px; background: var(--bg); }
.seam { display: flex; padding-left: 357px; height: 4px; background: #333; border: solid #424242; border-width: 2px 0 1px; overflow: hidden; }
.seam i { height: 1px; background: #8a8a8a; flex: none; width: 211px; }
.seam .a { background: linear-gradient(90deg, #8a8a8a 46px, #4c2a2a 46px 51px, #857030 51px 70px, #4c2a2a 70px 75px, #857030 75px 118px, #4c2a2a 118px 122px, #857030 122px 166px, #4c2a2a 166px 171px, #8a8a8a 171px); }
.seam .b { margin: 0 62px 0 76px; background: linear-gradient(90deg, #8a8a8a 45px, #4c2a2a 45px 50px, #8a8a8a 50px 64px, #857030 64px 88px, #8a8a8a 88px 109px, #857030 109px 180px, #4c2a2a 180px 185px, #8a8a8a 185px); }
.seam .c, .seam .d { width: 236px; }
.seam .c { background: #747478; }
.seam .d { margin-left: 51px; background: linear-gradient(90deg, #8a8a8a 20px, #86682c 20px 32px, #8a8a8a 32px 140px, #53687a 160px 210px, #666 210px); }

.tabs { display: flex; height: 35px; background: var(--bar); border-bottom: 1px solid var(--line); }
.tab { width: 50px; height: 34px; padding-bottom: 4px; color: var(--dim); border-right: 1px solid var(--line); white-space: nowrap; }
.tab.on { height: 35px; padding-bottom: 5px; background: var(--bg); color: #f4f4f4; }
.tab.narrow { width: 46px; padding-right: 10px; }
.burger { margin-left: auto; padding: 0 5px 2px 0; color: #b8b8b8; }
.timeline { background: var(--bg); }
.timeline .tab { width: 63px; }
.controls { display: flex; height: 46px; border-bottom: 1px solid var(--line); color: #989898; }
.play { display: flex; gap: 19px; width: 236px; margin: 3px 0; padding-left: 9px; border-right: 1px solid var(--line); }
.edit { display: flex; gap: 18px; width: 95px; padding-left: 12px; border-right: 1px solid var(--line); }
.tailbox { width: 56px; margin-left: auto; border-left: 1px solid var(--line); }
.stage { display: flex; justify-content: center; gap: 5px; height: 84px; padding-top: 27px; border-bottom: 1px solid var(--line); }
.create, .createmenu { height: 28px; border: 1px solid #6a6a6a; border-radius: 2px; background: #474747; }
.create { width: 141px; padding-bottom: 3px; font-size: 15px; }
.createmenu { width: 24px; }
.tfoot { display: flex; height: 24px; color: #989898; }
.tfleft { display: flex; gap: 13px; padding-left: 7px; width: 338px; }
.tfzoom { display: flex; align-items: center; justify-content: space-between; width: 191px; padding: 0 6px 0 4px; }
.track { width: 106px; height: 3px; margin-bottom: 8px; background: #757575; }

.dock { display: flex; flex-direction: column; width: 48px; flex: none; border: solid var(--line); border-width: 0 1px 2px 0; color: #dcdcdc; }
.dockgroup { height: 86px; background: var(--bg); border-bottom: 1px solid var(--line); }
.dockgroup + .dockgroup { border-bottom-width: 2px; height: 87px; }
.dockgroup button { width: 100%; height: 36px; padding-right: 2px; }
.dockrest { flex: 1; background: var(--bg); }

.panels { display: flex; flex-direction: column; width: 359px; flex: none; border: solid var(--line); border-width: 0 2px 2px; }
.panels .fold.end { padding-right: 4px; }
.panels .burger { padding-right: 5px; }
.panel { background: var(--bg); margin-bottom: 3px; border-bottom: 1px solid var(--line); }
.picker { display: flex; height: 278px; padding: 8px 20px 0 10px; }
.picker .swatches { margin: 5px 10px 0 2px; width: 35px; height: 36px; }
.picker .fg { outline: 2px solid #8a8a8a; }
.picker .bg { z-index: 0; }
.field { width: 235px; height: 243px; margin-left: -1px; background: linear-gradient(transparent, #000), linear-gradient(90deg, #fff, #f00); overflow: hidden; }
.field i { display: block; width: 16px; height: 16px; margin: -8px 0 0 -8px; border: 1px solid #000; border-radius: 8px; }
.hue { position: relative; width: 23px; height: 243px; margin-left: auto; background: linear-gradient(#f00, #f0f, #00f, #0ff, #0f0, #ff0, #f00); }
.hue svg { position: absolute; left: -12px; bottom: -7px; }

.kind { display: flex; align-items: center; gap: 7px; height: 43px; padding-left: 13px; border-bottom: 1px solid var(--line); font-size: 15px; color: #d6d6d6; }
.kindname { padding-bottom: 2px; }
.kindicon { display: grid; place-items: center; width: 28px; height: 28px; background: #383838; border: 1px solid #666; border-radius: 2px; }
.propbody { display: flex; height: 235px; }
.propmain { flex: 1; }
h3 { display: flex; align-items: center; gap: 5px; margin: 5px 0 0 7px; font-size: 15px; line-height: 20px; }
.dims { display: grid; grid-template: 26px 26px / 55px 20px 70px 36px 70px; gap: 10px 0; margin: 18px 0 0 10px; align-items: stretch; }
.chain { grid-row: 1 / 3; align-self: center; margin-left: 7px; }
.dims label { line-height: 26px; text-align: right; padding-right: 7px; font-size: 14px; color: #d0d0d0; }
.dims .pos { padding-right: 9px; }
.dims input { width: 100%; padding-left: 3px; border: 1px solid #6a6a6a; background: #474747; color: #f2f2f2; font-size: 14px; }
.dims input:disabled { background: #4f4f4f; border-color: #5f5f5f; color: #787878; }
.orient { display: flex; gap: 1px; margin: 15px 0 0 85px; }
.orient button { width: 31px; height: 31px; border-radius: 2px; }
.orient .on { background: #383838; border: 1px solid #606060; }
.propmain p { margin: 10px 0 0 84px; font-size: 15px; color: #d6d6d6; }
.pscroll { display: flex; flex-direction: column; align-items: center; width: 20px; height: 205px; padding: 5px 0; background: #4a4a4a; color: #989898; }
.pscroll i { width: 14px; height: 54px; margin-top: 3px; background: #6a6a6a; }
.pscroll .dn { margin-top: auto; }

.layers { display: flex; flex-direction: column; flex: 1; margin-bottom: 0; border-bottom: 0; }
.lrow { display: flex; align-items: flex-start; padding-left: 4px; border-bottom: 1px solid var(--line); color: #8a8a8a; font-size: 14px; line-height: 18px; }
.lrow .pick { border-color: #5f5f5f; background: #4f4f4f; height: 27px; }
.lrow .pick select { padding-bottom: 4px; }
.lrow .pick > svg:last-child { color: #6e6e6e; }
.filter { height: 41px; padding-top: 11px; }
.kindpick { width: 107px; }
.kindpick .lead { margin: 0 -6px 0 9px; color: #a0a0a0; }
.ficons { display: flex; gap: 12px; margin: 3px 0 0 20px; color: #a0a0a0; }
.toggle { width: 11px; height: 22px; margin: 0 0 0 20px; border-radius: 6px; background: radial-gradient(circle at 5px 6px, #a0a0a0 5px, #474747 6px); }
.blend { height: 36px; padding-top: 7px; }
.blend .pick { width: 147px; }
.blend label { width: 80px; padding-left: 10px; white-space: nowrap; }
.num { display: flex; width: 68px; height: 22px; border: 1px solid #5f5f5f; border-radius: 3px; }
.num input { width: 43px; margin: 1px 5px 1px 1px; padding-left: 2px; background: #474747; color: #787878; font-size: 13px; }
.num button { flex: 1; border-left: 1px solid #5f5f5f; color: #6e6e6e; }
.locks { height: 39px; padding: 7px 0 0 7px; border-bottom: 0; }
.lab { width: 45px; white-space: nowrap; }
.licons { display: flex; gap: 7px; width: 138px; margin-top: 1px; color: #a0a0a0; }
.locks label { width: 41px; white-space: nowrap; }
.list { display: flex; flex: 1; background: #4d4d4d; }
.rows { flex: 1; }
.lscroll { width: 19px; background: #4a4a4a; }
.layer { display: flex; height: 27px; }
.eye { width: 38px; background: var(--bg); border-right: 1px solid var(--line); color: #e0e0e0; }
.lname { display: flex; align-items: center; flex: 1; padding: 0 17px 0 4px; background: #6b6b6b; color: #fff; }
.lname .lk { margin-left: auto; }
.lt { padding-bottom: 3px; }
.thumb { display: grid; place-items: center; width: 40px; height: 7px; margin-right: 13px; background: #fff; outline: 1px solid #222; outline-offset: -1px; }
.thumb i { width: 32px; border-top: 1px dashed #999; }
.lfoot { position: relative; display: flex; align-items: center; justify-content: flex-end; gap: 14px; height: 31px; padding-right: 30px; border-top: 1px solid var(--line); color: #dcdcdc; }
.lfoot .dim { color: #878787; }
.lfoot button { width: 20px; }
.drop { position: relative; }
.drop::after { content: ""; position: absolute; right: -3px; bottom: -1px; border: 2px solid transparent; border-top-color: #dcdcdc; border-bottom: 0; }
.fx { font: italic 18px/20px "Liberation Serif", serif; }
.credit { position: absolute; right: 14px; top: 6px; font-size: 12px; line-height: 20px; color: #d8d8d8; }
</style>
